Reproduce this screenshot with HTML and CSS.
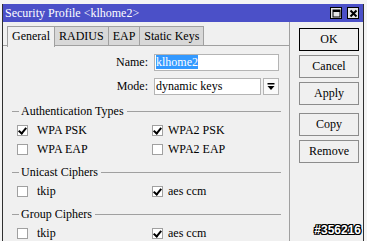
FILE: index.html
```html
<!DOCTYPE html>
<html lang="en">
<head>
    <meta charset="UTF-8">
    <meta name="viewport" content="width=device-width, initial-scale=1.0">
    <title>Security Profile</title>
    <link rel="stylesheet" href="styles.css">
</head>
<body>
    <div class="window">
        <div class="titlebar">
            <span class="title">Security Profile &lt;klhome2&gt;</span>
            <div class="title-btns">
                <span class="tbtn">
                    <svg width="9" height="9" viewBox="0 0 9 9"><rect x="1" y="1" width="7" height="7" fill="none" stroke="#000" stroke-width="1"/><rect x="1" y="1" width="7" height="2" fill="#000"/></svg>
                </span>
                <span class="tbtn">
                    <svg width="9" height="9" viewBox="0 0 9 9"><path d="M1.5 1.5 L7.5 7.5 M7.5 1.5 L1.5 7.5" stroke="#000" stroke-width="2"/></svg>
                </span>
            </div>
        </div>
        <div class="content">
            <div class="main">
                <div class="tabs">
                    <span class="tab active">General</span>
                    <span class="tab">RADIUS</span>
                    <span class="tab">EAP</span>
                    <span class="tab">Static Keys</span>
                </div>
                <div class="panel">
                    <div class="field">
                        <span class="label">Name:</span>
                        <div class="input name-input"><span class="sel">klhome2</span></div>
                    </div>
                    <div class="field">
                        <span class="label">Mode:</span>
                        <div class="input mode-input">dynamic keys</div>
                        <div class="drop">
                            <svg width="8" height="8" viewBox="0 0 8 8"><rect x="0.5" y="0" width="7" height="1.5" fill="#000"/><path d="M0.5 3 L7.5 3 L4 7 Z" fill="#000"/></svg>
                        </div>
                    </div>

                    <div class="group-title first"><span class="dash"></span><span>Authentication Types</span><span class="rule"></span></div>
                    <div class="checks">
                        <div class="check"><span class="box on"></span>WPA PSK</div>
                        <div class="check col2"><span class="box on"></span>WPA2 PSK</div>
                        <div class="check"><span class="box"></span>WPA EAP</div>
                        <div class="check col2"><span class="box"></span>WPA2 EAP</div>
                    </div>

                    <div class="group-title"><span class="dash"></span><span>Unicast Ciphers</span><span class="rule"></span></div>
                    <div class="checks">
                        <div class="check"><span class="box"></span>tkip</div>
                        <div class="check col2"><span class="box on"></span>aes ccm</div>
                    </div>

                    <div class="group-title"><span class="dash"></span><span>Group Ciphers</span><span class="rule"></span></div>
                    <div class="checks">
                        <div class="check"><span class="box"></span>tkip</div>
                        <div class="check col2"><span class="box on"></span>aes ccm</div>
                    </div>
                </div>
            </div>
            <div class="side">
                <div class="btn default">OK</div>
                <div class="btn">Cancel</div>
                <div class="btn">Apply</div>
                <div class="btn spaced">Copy</div>
                <div class="btn">Remove</div>
            </div>
        </div>
    </div>
    <div class="stamp">#356216</div>
</body>
</html>
```

FILE: styles.css
```css
body {
    margin: 0;
    background: #f4f4f4;
    font-family: "Liberation Serif", serif;
    font-size: 12px;
    color: #000;
    position: relative;
    height: 241px;
    overflow: hidden;
}
.window {
    margin: 4px 0 0 2px;
    width: 360px;
    height: 237px;
    border-left: 1px solid #303030;
    border-right: 1px solid #303030;
    background: #f0f0f0;
}
.titlebar {
    height: 18px;
    background: #4b50c8;
    display: flex;
    align-items: center;
    padding: 0 4px 0 2px;
}
.title {
    color: #fff;
}
.title-btns {
    margin-left: auto;
    display: flex;
    gap: 5px;
}
.tbtn {
    width: 12px;
    height: 12px;
    box-sizing: border-box;
    border: 1px solid #000;
    background: #e6e6e6;
    display: flex;
    align-items: center;
    justify-content: center;
}
.content {
    display: flex;
    height: 219px;
}
.main {
    width: 286px;
    border-right: 1px solid #a0a0a0;
    padding-top: 4px;
    display: flex;
    flex-direction: column;
}
.tabs {
    display: flex;
    margin-left: 4px;
    height: 19px;
    position: relative;
    z-index: 1;
}
.tab {
    padding: 0 4px;
    border: 1px solid #a0a0a0;
    border-bottom: none;
    background: #d8d8d8;
    line-height: 18px;
}
.tab + .tab {
    border-left: none;
}
.tab.active {
    background: #f0f0f0;
    height: 20px;
}
.panel {
    flex: 1;
    border-top: 1px solid #a0a0a0;
    padding-top: 8px;
}
.field {
    display: flex;
    height: 17px;
    margin-bottom: 7px;
}
.label {
    width: 145px;
    text-align: right;
    margin-right: 6px;
    line-height: 17px;
}
.input {
    box-sizing: border-box;
    height: 17px;
    border: 1px solid #b4b4b4;
    background: #fff;
    padding-left: 1px;
    line-height: 15px;
}
.name-input {
    width: 125px;
}
.mode-input {
    width: 107px;
}
.sel {
    background: #3399ff;
    color: #fff;
}
.drop {
    box-sizing: border-box;
    width: 16px;
    height: 17px;
    margin-left: 2px;
    border: 1px solid #b4b4b4;
    background: #fafafa;
    display: flex;
    align-items: center;
    justify-content: center;
}
.group-title {
    display: flex;
    align-items: center;
    height: 18px;
    margin-top: 4px;
    padding: 0 8px 0 9px;
}
.group-title.first {
    margin-top: 1px;
}
.dash {
    width: 7px;
    height: 1px;
    background: #a0a0a0;
    margin-right: 2px;
}
.rule {
    flex: 1;
    height: 1px;
    background: #a0a0a0;
    margin-left: 3px;
}
.checks {
    display: grid;
    grid-template-columns: 135px 1fr;
    grid-auto-rows: 19px;
    padding-left: 14px;
    margin-top: 1px;
}
.check {
    display: flex;
    align-items: center;
}
.box {
    box-sizing: border-box;
    width: 11px;
    height: 11px;
    border: 1px solid #a0a0a0;
    background: #fff;
    margin-right: 9px;
    position: relative;
}
.col2 .box {
    margin-right: 5px;
}
.box.on::after {
    content: "";
    position: absolute;
    left: 2px;
    top: 0px;
    width: 3px;
    height: 6px;
    border-right: 2px solid #000;
    border-bottom: 2px solid #000;
    transform: rotate(40deg);
}
.side {
    padding: 6px 0 0 9px;
}
.btn {
    box-sizing: border-box;
    width: 60px;
    height: 23px;
    border: 1px solid #8c8c8c;
    background: #f0f0f0;
    text-align: center;
    line-height: 21px;
    margin-bottom: 4px;
}
.btn.default {
    border-color: #000;
}
.btn.spaced {
    margin-top: 8px;
}
.stamp {
    position: absolute;
    right: 6px;
    bottom: 4px;
    font-family: "Liberation Sans", sans-serif;
    font-weight: bold;
    font-size: 12px;
    color: #fff;
    text-shadow: 1px 0 #000, -1px 0 #000, 0 1px #000, 0 -1px #000, 1px 1px #000, -1px -1px #000, 1px -1px #000, -1px 1px #000;
}
```
